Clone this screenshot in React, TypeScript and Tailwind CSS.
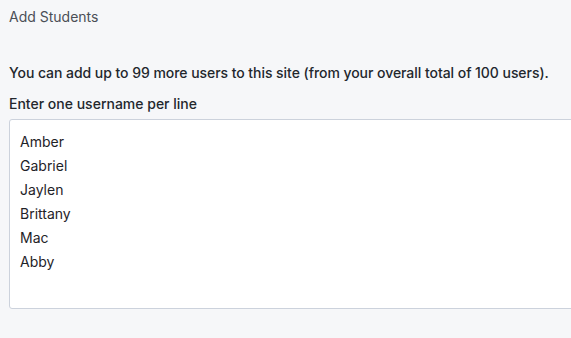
const NAMES = ["Amber", "Gabriel", "Jaylen", "Brittany", "Mac", "Abby"];

export default function App() {
  return (
    <div
      className="w-[571px] h-[338px] overflow-hidden bg-[#f6f7f9] text-[#1f2328]"
      style={{ fontFamily: "Inter, 'Noto Sans', sans-serif" }}
    >
      <div className="pl-[9px] pt-[8px]">
        <h2 className="text-[14px] leading-[18px] text-[#4b4f56]">Add Students</h2>
        <p className="mt-[38px] text-[14px] leading-[18px] font-medium text-[#23272d] tracking-[-0.05px]">
          You can add up to 99 more users to this site (from your overall total of 100 users).
        </p>
        <label className="block mt-[13px] text-[14px] leading-[18px] font-medium text-[#23272d]">
          Enter one username per line
        </label>
        <div className="mt-[6px] w-[620px] h-[190px] bg-white border border-[#ccd2dc] rounded-[3px] pt-[10px] pl-[10px]">
          {NAMES.map((n) => (
            <div key={n} className="text-[14px] leading-[24px] text-[#1f2328]">
              {n}
            </div>
          ))}
        </div>
      </div>
    </div>
  );
}
